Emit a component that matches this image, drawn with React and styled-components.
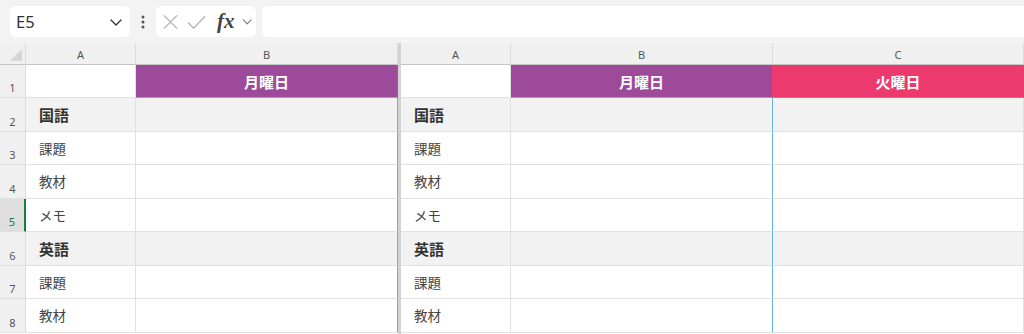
import React from 'react';
import styled, { createGlobalStyle } from 'styled-components';

const GlobalStyle = createGlobalStyle`
  html, body {
    margin: 0;
    padding: 0;
    background: #f3f3f3;
  }
  * {
    box-sizing: border-box;
  }
`;

const FONT = `"Noto Sans", "Noto Sans CJK JP", sans-serif`;

const Window = styled.div`
  width: 1024px;
  height: 334px;
  overflow: hidden;
  background: #f3f3f3;
  font-family: ${FONT};
  display: flex;
  flex-direction: column;
`;

const Toolbar = styled.div`
  height: 43px;
  flex: none;
  display: flex;
  align-items: flex-start;
  padding: 6px 0 0 10px;
`;

const NameBox = styled.div`
  width: 120px;
  height: 31px;
  background: #fff;
  border-radius: 6px;
  display: flex;
  align-items: center;
  justify-content: space-between;
  padding: 0 6px 0 6px;
  font-size: 16.5px;
  color: #333;
`;

const MoreDots = styled.div`
  width: 26px;
  height: 31px;
  display: flex;
  align-items: center;
  justify-content: center;
`;

const FormulaTools = styled.div`
  width: 100px;
  height: 31px;
  background: #fff;
  border-radius: 6px;
  display: flex;
  align-items: center;
  padding: 0 3px 0 5px;
  gap: 6px;
`;

const Fx = styled.span`
  font-family: "Liberation Serif", "DejaVu Serif", serif;
  font-style: italic;
  font-weight: bold;
  font-size: 21px;
  color: #444;
  margin-left: 4px;
  line-height: 1;
`;

const FormulaInput = styled.div`
  flex: 1;
  height: 31px;
  background: #fff;
  border-radius: 6px 0 0 6px;
  margin-left: 6px;
`;

const Sheet = styled.div`
  flex: 1;
  display: flex;
  min-height: 0;
`;

const Pane = styled.div`
  display: grid;
  grid-template-columns: ${p => p.$cols};
  grid-template-rows: 22px 33px 34px 33px 34px 33px 34px 33px 34px;
  flex: ${p => (p.$grow ? 1 : 'none')};
  background: #fff;
`;

const Splitter = styled.div`
  width: 3px;
  flex: none;
  background: #d2d2d2;
`;

const Corner = styled.div`
  background: #f0f0f0;
  border-right: 1px solid #dcdcdc;
  border-bottom: 1px solid #c4c4c4;
  position: relative;
  &::after {
    content: '';
    position: absolute;
    right: 3px;
    bottom: 3px;
    border-style: solid;
    border-width: 0 0 12px 12px;
    border-color: transparent transparent #d6d6d6 transparent;
  }
`;

const ColHead = styled.div`
  background: #f0f0f0;
  border-right: 1px solid #dcdcdc;
  border-bottom: 1px solid #c4c4c4;
  font-size: 11px;
  color: #555;
  display: flex;
  align-items: center;
  justify-content: center;
  padding-top: 1px;
`;

const RowHead = styled.div`
  background: ${p => (p.$selected ? '#dedede' : '#f0f0f0')};
  border-bottom: 1px solid #e0e0e0;
  border-right: ${p => (p.$selected ? '2px solid #1e7a45' : '1px solid #dcdcdc')};
  color: ${p => (p.$selected ? '#1e7a45' : '#555')};
  font-size: 11px;
  display: flex;
  align-items: flex-end;
  justify-content: center;
  padding-bottom: 2px;
`;

const Cell = styled.div`
  background: ${p => (p.$band ? '#f2f2f2' : '#fff')};
  border-right: 1px solid ${p => p.$rightColor || '#e1e1e1'};
  border-bottom: 1px solid #e1e1e1;
  display: flex;
  align-items: center;
  padding: 0 13px 1px;
  font-size: ${p => (p.$bold ? '15px' : '13.5px')};
  font-weight: ${p => (p.$bold ? 700 : 400)};
  color: ${p => (p.$bold ? '#333' : '#444')};
`;

const DayCell = styled.div`
  background: ${p => p.$color};
  border-bottom: 1px solid ${p => p.$under};
  border-right: 1px solid ${p => p.$right};
  color: #fff;
  font-size: 15px;
  font-weight: 700;
  display: flex;
  align-items: center;
  justify-content: center;
  padding-top: 1px;
`;

const PURPLE = '#9d4a9b';
const PINK = '#ed3a6e';
const BLUE = '#62b4dc';

const rows = [
  { label: '国語', band: true },
  { label: '課題' },
  { label: '教材' },
  { label: 'メモ' },
  { label: '英語', band: true },
  { label: '課題' },
  { label: '教材' },
];

const Chevron = ({ size = 14, color = '#444' }) => (
  <svg width={size} height={size} viewBox="0 0 16 16">
    <path d="M3 6l5 5 5-5" fill="none" stroke={color} strokeWidth="1.4" strokeLinecap="round" strokeLinejoin="round" />
  </svg>
);

const Dots = () => (
  <svg width="4" height="14" viewBox="0 0 4 14">
    <circle cx="2" cy="2" r="1.5" fill="#555" />
    <circle cx="2" cy="7" r="1.5" fill="#555" />
    <circle cx="2" cy="12" r="1.5" fill="#555" />
  </svg>
);

const CrossIcon = () => (
  <svg width="20" height="20" viewBox="0 0 20 20">
    <path d="M3 3l14 14M17 3L3 17" stroke="#b0b0b0" strokeWidth="1.3" fill="none" />
  </svg>
);

const CheckIcon = () => (
  <svg width="22" height="20" viewBox="0 0 22 20">
    <path d="M2 10.5l6 6L20 4" stroke="#b0b0b0" strokeWidth="1.3" fill="none" />
  </svg>
);

function SheetPane({ withRowHeads, dayCols, grow, cols }) {
  return (
    <Pane $cols={cols} $grow={grow}>
      {withRowHeads && <Corner />}
      <ColHead>A</ColHead>
      {dayCols.map(d => (
        <ColHead key={d.letter}>{d.letter}</ColHead>
      ))}

      {withRowHeads && <RowHead>1</RowHead>}
      <Cell />
      {dayCols.map(d => (
        <DayCell key={d.letter} $color={d.color} $under={d.under} $right={d.right}>
          {d.name}
        </DayCell>
      ))}

      {rows.map((r, i) => (
        <React.Fragment key={i}>
          {withRowHeads && <RowHead $selected={i === 3}>{i + 2}</RowHead>}
          <Cell $band={r.band} $bold={r.band}>{r.label}</Cell>
          {dayCols.map(d => (
            <Cell key={d.letter} $band={r.band} $rightColor={d.bodyRight} />
          ))}
        </React.Fragment>
      ))}
    </Pane>
  );
}

export default function App() {
  const monday = { letter: 'B', name: '月曜日', color: PURPLE, under: BLUE, right: PINK, bodyRight: BLUE };
  const tuesday = { letter: 'C', name: '火曜日', color: PINK, under: '#e35ea6', right: PINK, bodyRight: '#e1e1e1' };
  return (
    <Window>
      <GlobalStyle />
      <Toolbar>
        <NameBox>
          <span>E5</span>
          <Chevron size={16} color="#333" />
        </NameBox>
        <MoreDots>
          <Dots />
        </MoreDots>
        <FormulaTools>
          <CrossIcon />
          <CheckIcon />
          <Fx>fx</Fx>
          <Chevron size={13} color="#777" />
        </FormulaTools>
        <FormulaInput />
      </Toolbar>
      <Sheet>
        <SheetPane withRowHeads cols="26px 110px 262px" dayCols={[monday]} />
        <Splitter />
        <SheetPane grow cols="110px 262px 1fr" dayCols={[monday, tuesday]} />
      </Sheet>
    </Window>
  );
}
